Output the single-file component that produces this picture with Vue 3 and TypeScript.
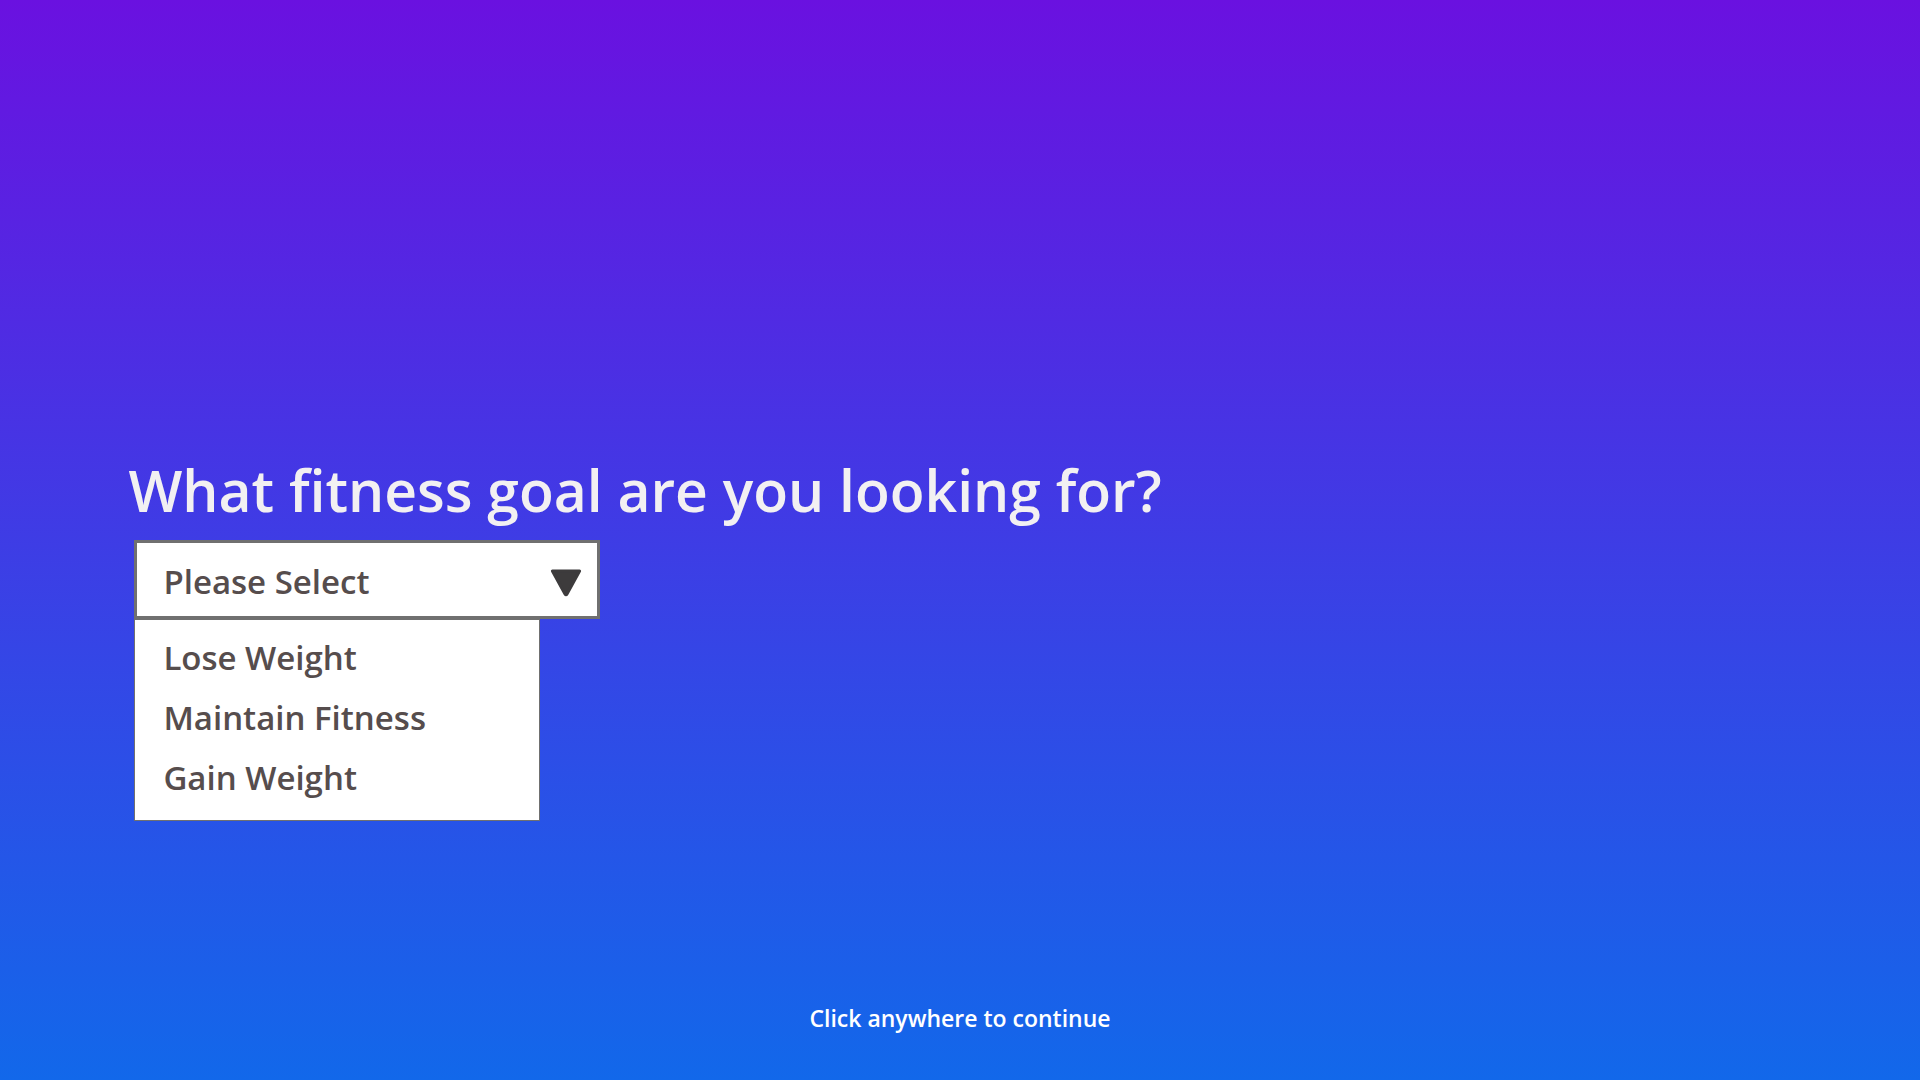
<script setup lang="ts">
import { ref } from 'vue'

const goals: string[] = ['Lose Weight', 'Maintain Fitness', 'Gain Weight']
const selected = ref<string>('')

function choose(goal: string): void {
  selected.value = goal
}
</script>

<template>
  <main class="page">
    <section class="question">
      <label class="title" for="goal">What fitness goal are you looking for?</label>
      <div class="field">
        <select id="goal" v-model="selected" class="select">
          <option value="">Please Select</option>
          <option v-for="goal in goals" :key="goal" :value="goal">{{ goal }}</option>
        </select>
        <svg class="arrow" width="32" height="28" viewBox="0 0 32 28" aria-hidden="true">
          <path
            d="M2.4 2H29.6L17 25Q16 26.6 15 25Z"
            fill="#3d3b3c"
            stroke="#3d3b3c"
            stroke-width="3"
            stroke-linejoin="round"
          />
        </svg>
      </div>
      <ul class="menu">
        <li v-for="goal in goals" :key="goal">
          <button type="button" class="option" @click="choose(goal)">{{ goal }}</button>
        </li>
      </ul>
    </section>
    <button type="button" class="continue">Click anywhere to continue</button>
  </main>
</template>

<style>
body {
  margin: 0;
}
</style>

<style scoped>
.page {
  box-sizing: border-box;
  display: flex;
  flex-direction: column;
  justify-content: space-between;
  min-height: 100vh;
  padding: 42vh 7% 42px;
  background: linear-gradient(#6a11e0, #1268ea);
  font-family: 'Segoe UI', 'Open Sans', 'Noto Sans', sans-serif;
  font-weight: 600;
}

.question {
  display: flex;
  flex-direction: column;
  align-items: flex-start;
}

.title {
  margin-left: -6px;
  padding-bottom: 14px;
  color: #f2f0f2;
  font-size: 57px;
  line-height: 72px;
}

.field {
  display: flex;
  align-items: center;
  justify-content: flex-end;
  box-sizing: border-box;
  width: 466px;
  max-width: 100%;
  height: 79px;
  padding-top: 4px;
  border: 3px solid #707070;
  background: #fff;
}

.select {
  flex: 1;
  height: 100%;
  padding: 0 0 0 26px;
  border: 0;
  appearance: none;
  background: transparent;
  color: #564d4d;
  font: inherit;
  font-size: 33px;
}

.arrow {
  flex: none;
  margin: 4px 15px 0 0;
}

.menu {
  box-sizing: border-box;
  width: 406px;
  max-width: 100%;
  margin: 0;
  padding: 8px 0 12px;
  border: 1px solid #707070;
  background: #fff;
  list-style: none;
}

.option {
  display: block;
  width: 100%;
  padding: 0 28px;
  border: 0;
  background: transparent;
  color: #564d4d;
  font: inherit;
  font-size: 33px;
  line-height: 60px;
  text-align: left;
}

.continue {
  align-self: center;
  padding: 0;
  border: 0;
  background: transparent;
  color: #fff;
  font: inherit;
  font-size: 23px;
  line-height: 40px;
}
</style>
